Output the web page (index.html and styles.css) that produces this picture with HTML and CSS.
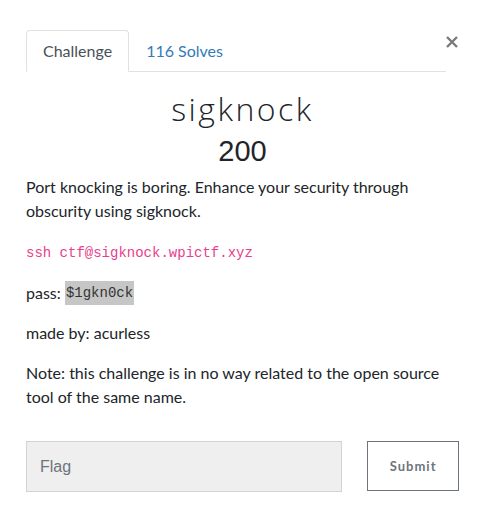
FILE: index.html
```html
<!DOCTYPE html>
<html>
<head>
<meta charset="utf-8">
<link rel="stylesheet" href="styles.css">
</head>
<body>
<div class="modal">
  <div class="header">
    <ul class="tabs">
      <li class="tab active">Challenge</li>
      <li class="tab link">116 Solves</li>
    </ul>
    <button class="close" aria-label="Close">
      <svg width="12" height="12" viewBox="0 0 12 12"><path d="M1 1L11 11M11 1L1 11" stroke="#7a7a7a" stroke-width="2.4" stroke-linecap="butt"/></svg>
    </button>
  </div>
  <h2 class="title">sigknock</h2>
  <h3 class="value">200</h3>
  <div class="desc">
    <p>Port knocking is boring. Enhance your security through obscurity using sigknock.</p>
    <p><code class="pink">ssh ctf@sigknock.wpictf.xyz</code></p>
    <p>pass: <code class="hl">$1gkn0ck</code></p>
    <p>made by: acurless</p>
    <p>Note: this challenge is in no way related to the open source tool of the same name.</p>
  </div>
  <form class="submit-row">
    <input class="flag" type="text" placeholder="Flag">
    <button class="btn" type="button">Submit</button>
  </form>
</div>
</body>
</html>
```

FILE: styles.css
```css
* { box-sizing: border-box; }
html, body { margin: 0; padding: 0; background: #fff; }
body {
  font-family: Lato, "Open Sans", sans-serif;
  font-size: 16px;
  line-height: 24px;
  color: #212529;
}
.modal {
  padding: 30px 29px 0 26px;
}
.header {
  display: flex;
  align-items: flex-start;
}
.tabs {
  list-style: none;
  margin: 0;
  padding: 0;
  display: flex;
  width: 420px;
  border-bottom: 1px solid #dee2e6;
}
.tab {
  padding: 8px 16px;
  border: 1px solid transparent;
  border-top-left-radius: 4px;
  border-top-right-radius: 4px;
  margin-bottom: -1px;
}
.tab.active {
  color: #495057;
  border-color: #dee2e6 #dee2e6 #fff;
  background: #fff;
}
.tab.link { color: #337ab7; }
.close {
  margin: 6px 0 0 0;
  padding: 0;
  border: 0;
  background: none;
  width: 12px;
  height: 12px;
  display: flex;
}
.title {
  margin: 17px 0 0;
  text-align: center;
  font-family: "Open Sans", Lato, sans-serif;
  font-weight: 300;
  font-size: 32px;
  line-height: 40px;
  letter-spacing: 2.5px;
  color: #212529;
}
.value {
  margin: 5px 0 0;
  text-align: center;
  font-family: "Liberation Sans", Arial, sans-serif;
  font-weight: 400;
  font-size: 29px;
  line-height: 34px;
  color: #212529;
}
.desc { margin-top: 7px; }
.desc p { margin: 0 0 16px; }
code {
  font-family: "Liberation Mono", "DejaVu Sans Mono", monospace;
  font-size: 14px;
}
.pink { color: #e83e8c; }
.hl {
  display: inline-block;
  background: #c6c6c6;
  color: #333;
  line-height: 24px;
  padding: 0 1px;
  vertical-align: top;
}
.submit-row {
  display: flex;
  gap: 25px;
  margin-top: 32px;
}
.flag {
  width: 317px;
  height: 51px;
  background: #efefef;
  border: 1px solid #ced4da;
  padding: 0 13px;
  font-family: "Liberation Sans", Arial, sans-serif;
  font-size: 16px;
  color: #495057;
}
.flag::placeholder { color: #6c757d; }
.btn {
  width: 92px;
  height: 50px;
  background: #fff;
  border: 1px solid #6c757d;
  color: #6c757d;
  font-family: Lato, sans-serif;
  font-weight: 700;
  font-size: 13px;
  letter-spacing: 1px;
  padding: 0;
}
```
